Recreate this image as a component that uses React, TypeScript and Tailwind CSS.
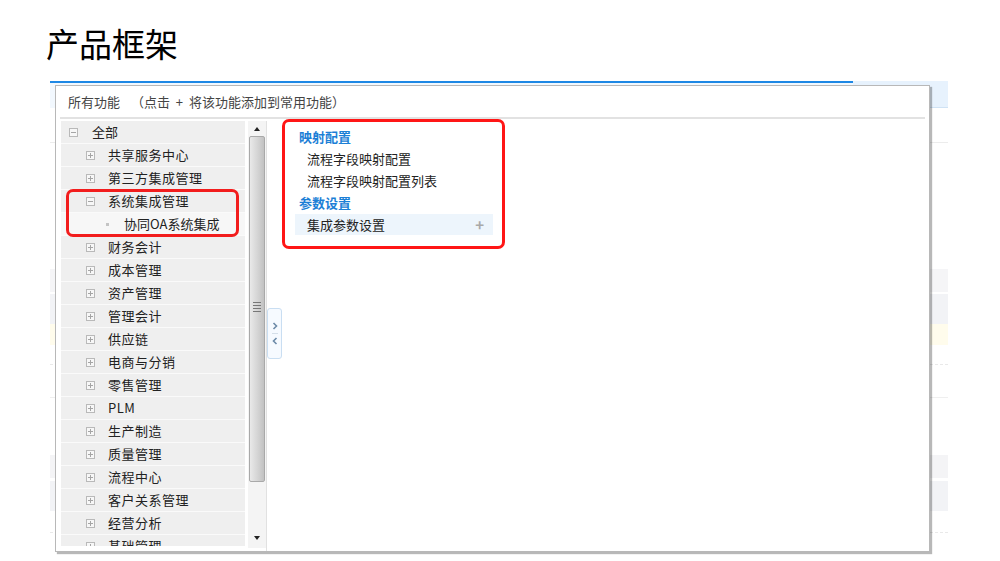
import React from "react";

type Node = { label: string; level: number; open?: boolean };

const before: Node[] = [
  { label: "全部", level: 0, open: true },
  { label: "共享服务中心", level: 1 },
  { label: "第三方集成管理", level: 1 },
];

const marked: Node[] = [
  { label: "系统集成管理", level: 1, open: true },
  { label: "协同OA系统集成", level: 2 },
];

const after: Node[] = [
  { label: "财务会计", level: 1 },
  { label: "成本管理", level: 1 },
  { label: "资产管理", level: 1 },
  { label: "管理会计", level: 1 },
  { label: "供应链", level: 1 },
  { label: "电商与分销", level: 1 },
  { label: "零售管理", level: 1 },
  { label: "PLM", level: 1 },
  { label: "生产制造", level: 1 },
  { label: "质量管理", level: 1 },
  { label: "流程中心", level: 1 },
  { label: "客户关系管理", level: 1 },
  { label: "经营分析", level: 1 },
  { label: "基础管理", level: 1 },
];

const Toggle = ({ open }: { open?: boolean }) => (
  <span className="relative flex h-[9px] w-[9px] items-center justify-center border border-[#b9b9b9] bg-[#f7f7f7]">
    <span className="absolute h-px w-[5px] bg-[#a5a5a5]" />
    {!open && <span className="absolute h-[5px] w-px bg-[#a5a5a5]" />}
  </span>
);

const Row = ({ node }: { node: Node }) => {
  if (node.level === 2) {
    return (
      <div className="flex h-[23px] items-center border-b border-[#fafafa] bg-[#f7f7f7] pl-[45px]">
        <span className="h-[3px] w-[3px] bg-[#c4c4c4]" />
        <span className="ml-[15px] text-[13px] text-[#222]">{node.label}</span>
      </div>
    );
  }
  return (
    <div
      className={
        node.level === 0
          ? "flex h-[23px] items-center border-b border-[#fafafa] bg-[#efefef] pl-[8px]"
          : "flex h-[23px] items-center border-b border-[#fafafa] bg-[#efefef] pl-[25px]"
      }
    >
      <Toggle open={node.open} />
      <span
        className={
          node.level === 0
            ? "ml-[14px] text-[13px] text-[#222]"
            : "ml-[13px] text-[13px] tracking-[0.5px] text-[#222]"
        }
      >
        {node.label}
      </span>
    </div>
  );
};

const Scrollbar = () => (
  <div className="flex h-[427px] w-[18px] flex-col items-center bg-[#f4f4f4]">
    <div className="flex h-[15px] items-center justify-center">
      <span className="h-0 w-0 border-x-[3px] border-b-[4px] border-x-transparent border-b-[#222]" />
    </div>
    <div className="flex h-[346px] w-[16px] flex-col items-center justify-center rounded-[2px] border border-[#a9a9a9] bg-gradient-to-r from-[#e9e9e9] via-[#d6d6d6] to-[#c2c2c2]">
      <div className="mt-[-4px] flex flex-col gap-[2px]">
        <span className="h-px w-[8px] bg-[#777]" />
        <span className="h-px w-[8px] bg-[#777]" />
        <span className="h-px w-[8px] bg-[#777]" />
        <span className="h-px w-[8px] bg-[#777]" />
      </div>
    </div>
    <div className="flex flex-1 items-end pb-[8px]">
      <span className="h-0 w-0 border-x-[3px] border-t-[4px] border-x-transparent border-t-[#222]" />
    </div>
  </div>
);

const Chevron = ({ dir }: { dir: "left" | "right" }) => (
  <svg width="8" height="8" viewBox="0 0 8 8">
    <path
      d={dir === "right" ? "M2.5 1 L5.5 4 L2.5 7" : "M5.5 1 L2.5 4 L5.5 7"}
      fill="none"
      stroke="#6c8aa8"
      strokeWidth="1.6"
    />
  </svg>
);

export default function App() {
  return (
    <div className="relative h-[561px] w-[1000px] overflow-hidden bg-white font-['Noto_Sans_CJK_SC',sans-serif]">
      <h1 className="pl-[46px] pt-[23px] text-[33px] leading-[40px] text-black">产品框架</h1>

      {/* background page behind the dialog */}
      <div className="relative ml-[50px] mt-[18px] w-[898px]">
        <div className="flex h-[27px]">
          <div className="w-[803px] border-t-2 border-[#1e88e5] bg-[#f2f8fe]" />
          <div className="flex-1 border-b border-[#cfe2f4] bg-[#e7f2fd]" />
        </div>
        <div className="h-[35px] border-b border-[#ececec]" />
        <div className="h-[126px]" />
        <div className="h-[23px] bg-[#f5f5f7]" />
        <div className="h-[2px]" />
        <div className="h-[30px] bg-[#f2f3f6]" />
        <div className="h-[21px] bg-[#fffcec]" />
        <div className="h-[20px] border-b border-dashed border-[#e9e9e9]" />
        <div className="h-[33px] border-b border-[#efefef]" />
        <div className="h-[57px]" />
        <div className="h-[23px] bg-[#f4f4f6]" />
        <div className="h-[3px]" />
        <div className="h-[30px] bg-[#f2f3f6]" />
        <div className="h-[22px] border-b border-dashed border-[#e9e9e9]" />

        {/* dialog */}
        <div className="absolute left-[5px] top-[4px] flex h-[467px] w-[875px] flex-col border border-[#b8b8b8] bg-white shadow-[2px_2px_1px_rgba(0,0,0,0.28)]">
          <div className="flex h-[31px] items-center whitespace-pre pl-[12px] text-[13px] text-[#444]">
            <span>所有功能</span>
            <span className="ml-[11px]">（点击  +  将该功能添加到常用功能）</span>
          </div>
          <div className="mx-[4px] h-[2px] bg-[#e2e2e2]" />

          <div className="flex flex-1">
            {/* tree */}
            <div className="flex pl-[5px] pt-[2px]">
              <div className="h-[425px] w-[184px] overflow-hidden">
                {before.map((n) => (
                  <Row key={n.label} node={n} />
                ))}
                <div className="relative">
                  {marked.map((n) => (
                    <Row key={n.label} node={n} />
                  ))}
                  <div className="absolute -bottom-px -top-px left-[5px] right-[6px] rounded-[7px] border-[3px] border-[#f21d1d]" />
                </div>
                {after.map((n) => (
                  <Row key={n.label} node={n} />
                ))}
              </div>
              <div className="ml-[3px]">
                <Scrollbar />
              </div>
              <div className="w-px bg-[#e1e1e1]" />
            </div>

            {/* collapse handle */}
            <div className="flex w-[15px] items-center">
              <div className="mt-[-4px] flex h-[51px] w-[15px] flex-col items-center justify-center gap-[3px] rounded-[3px] border border-[#c9def2] bg-[#f6faff]">
                <Chevron dir="right" />
                <span className="h-px w-[6px] bg-[#d5dfe9]" />
                <Chevron dir="left" />
              </div>
            </div>

            {/* functions */}
            <div>
              <div className="h-[130px] w-[223px] rounded-[7px] border-[3px] border-[#ff1616] pt-[4px] text-[13px] leading-[22px]">
                <div className="pl-[14px] font-bold text-[#1c7fd6]">映射配置</div>
                <div className="pl-[22px] text-[#222]">流程字段映射配置</div>
                <div className="pl-[22px] text-[#222]">流程字段映射配置列表</div>
                <div className="pl-[14px] font-bold text-[#1c7fd6]">参数设置</div>
                <div className="ml-[10px] flex h-[21px] w-[198px] items-center justify-between bg-[#edf5fc] pl-[12px] pr-[9px] text-[#222]">
                  <span>集成参数设置</span>
                  <span className="text-[15px] font-bold text-[#a9a9a9]">+</span>
                </div>
              </div>
            </div>
          </div>
        </div>
      </div>
    </div>
  );
}
